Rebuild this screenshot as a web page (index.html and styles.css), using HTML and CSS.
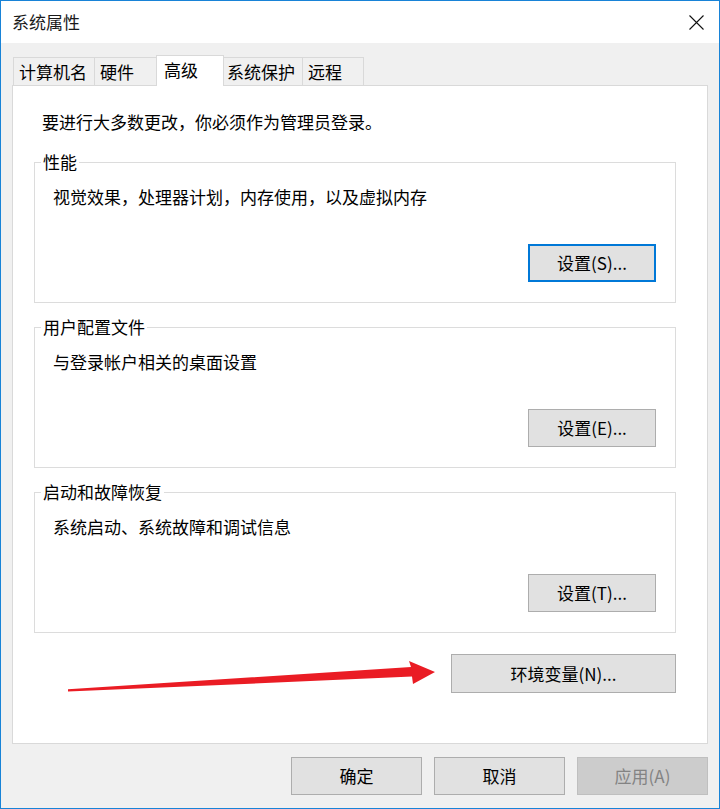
FILE: index.html
```html
<!DOCTYPE html>
<html lang="zh-CN">
<head>
  <meta charset="UTF-8">
  <title>系统属性</title>
  <link rel="stylesheet" href="styles.css">
</head>
<body>
  <div class="window">
    <!-- Title bar -->
    <div class="titlebar">
      <span class="title">系统属性</span>
      <svg class="close" width="15" height="15" viewBox="0 0 15 15">
        <path d="M0.5 0.5 L14.5 14.5 M14.5 0.5 L0.5 14.5" stroke="#111" stroke-width="1.1" fill="none"/>
      </svg>
    </div>

    <div class="content">
      <!-- Tabs -->
      <div class="tabs">
        <div class="tab">计算机名</div>
        <div class="tab">硬件</div>
        <div class="tab active">高级</div>
        <div class="tab">系统保护</div>
        <div class="tab">远程</div>
      </div>

      <!-- Advanced page -->
      <div class="panel">
        <p class="intro">要进行大多数更改，你必须作为管理员登录。</p>

        <div class="group">
          <span class="group-title">性能</span>
          <p class="group-desc">视觉效果，处理器计划，内存使用，以及虚拟内存</p>
          <button class="btn btn-focus group-btn">设置(S)...</button>
        </div>

        <div class="group">
          <span class="group-title">用户配置文件</span>
          <p class="group-desc">与登录帐户相关的桌面设置</p>
          <button class="btn group-btn">设置(E)...</button>
        </div>

        <div class="group">
          <span class="group-title">启动和故障恢复</span>
          <p class="group-desc">系统启动、系统故障和调试信息</p>
          <button class="btn group-btn">设置(T)...</button>
        </div>

        <button class="btn env-btn">环境变量(N)...</button>
      </div>

      <!-- Dialog buttons -->
      <div class="dialog-buttons">
        <button class="btn">确定</button>
        <button class="btn">取消</button>
        <button class="btn" disabled>应用(A)</button>
      </div>
    </div>

    <!-- Red arrow pointing at the env button -->
    <svg class="arrow" width="720" height="809" viewBox="0 0 720 809">
      <polygon points="68,689.3 411,667 409,661 435,672 413,684 412,676.6 68,691.6" fill="#ea1c24"/>
    </svg>
  </div>
</body>
</html>
```

FILE: styles.css
```css
* {
  margin: 0;
  padding: 0;
  box-sizing: border-box;
}

body {
  font-family: "Noto Sans CJK SC", "Noto Sans", sans-serif;
  font-size: 17px;
  color: #000;
  background: #fff;
}

.window {
  position: relative;
  width: 720px;
  height: 809px;
  border: 1px solid #1883d7;
  display: flex;
  flex-direction: column;
}

/* Title bar */
.titlebar {
  height: 42px;
  background: #fff;
  display: flex;
  align-items: center;
  justify-content: space-between;
  padding: 0 15px 0 11px;
}

.title {
  line-height: 20px;
  color: #1a1a1a;
}

.content {
  flex: 1;
  background: #f0f0f0;
  padding: 12px 11px 0;
}

/* Tabs */
.tabs {
  display: flex;
  align-items: flex-start;
  height: 31px;
  margin-left: 1px;
  margin-bottom: -1px;
  position: relative;
  z-index: 1;
}

.tab {
  margin-top: 2px;
  margin-right: -1px;
  height: 28px;
  line-height: 27px;
  padding-left: 5px;
  border: 1px solid #d9d9d9;
  border-bottom: none;
  background: #f0f0f0;
  white-space: nowrap;
}

.tab:nth-child(1) { width: 82px; }
.tab:nth-child(2) { width: 63px; }
.tab:nth-child(4) { width: 80px; padding-left: 3px; }
.tab:nth-child(5) { width: 62px; }

.tab.active {
  width: 68px;
  margin-top: 0;
  height: 31px;
  line-height: 28px;
  padding-left: 7px;
  background: #fff;
  position: relative;
  z-index: 2;
}

/* Page panel */
.panel {
  height: 659px;
  background: #fff;
  border: 1px solid #d9d9d9;
  padding: 0 31px 0 21px;
  display: flex;
  flex-direction: column;
}

.intro {
  margin: 26px 0 0 8px;
  line-height: 20px;
}

/* Group boxes */
.group {
  height: 141px;
  margin-top: 24px;
  border: 1px solid #dcdcdc;
  display: flex;
  flex-direction: column;
}

.intro + .group {
  margin-top: 30px;
}

.group-title {
  align-self: flex-start;
  margin: -11px 0 0 6px;
  padding: 0 2px;
  line-height: 20px;
  background: #fff;
}

.group-desc {
  margin: 15px 0 0 18px;
  line-height: 20px;
}

/* Buttons */
.btn {
  font-family: inherit;
  font-size: 17px;
  color: #000;
  background: #e1e1e1;
  border: 1px solid #adadad;
  width: 131px;
  height: 38px;
  line-height: 20px;
}

.btn-focus {
  border: 2px solid #0078d7;
}

.btn:disabled {
  background: #cccccc;
  border-color: #bfbfbf;
  color: #838383;
}

.group-btn {
  width: 128px;
  align-self: flex-end;
  margin: auto 19px 20px 0;
}

.env-btn {
  width: 225px;
  height: 39px;
  align-self: flex-end;
  margin-top: 21px;
}

.dialog-buttons {
  display: flex;
  justify-content: flex-end;
  gap: 12px;
  margin-top: 13px;
}

/* Annotation overlay */
.arrow {
  position: absolute;
  left: -1px;
  top: -1px;
  pointer-events: none;
}
```
